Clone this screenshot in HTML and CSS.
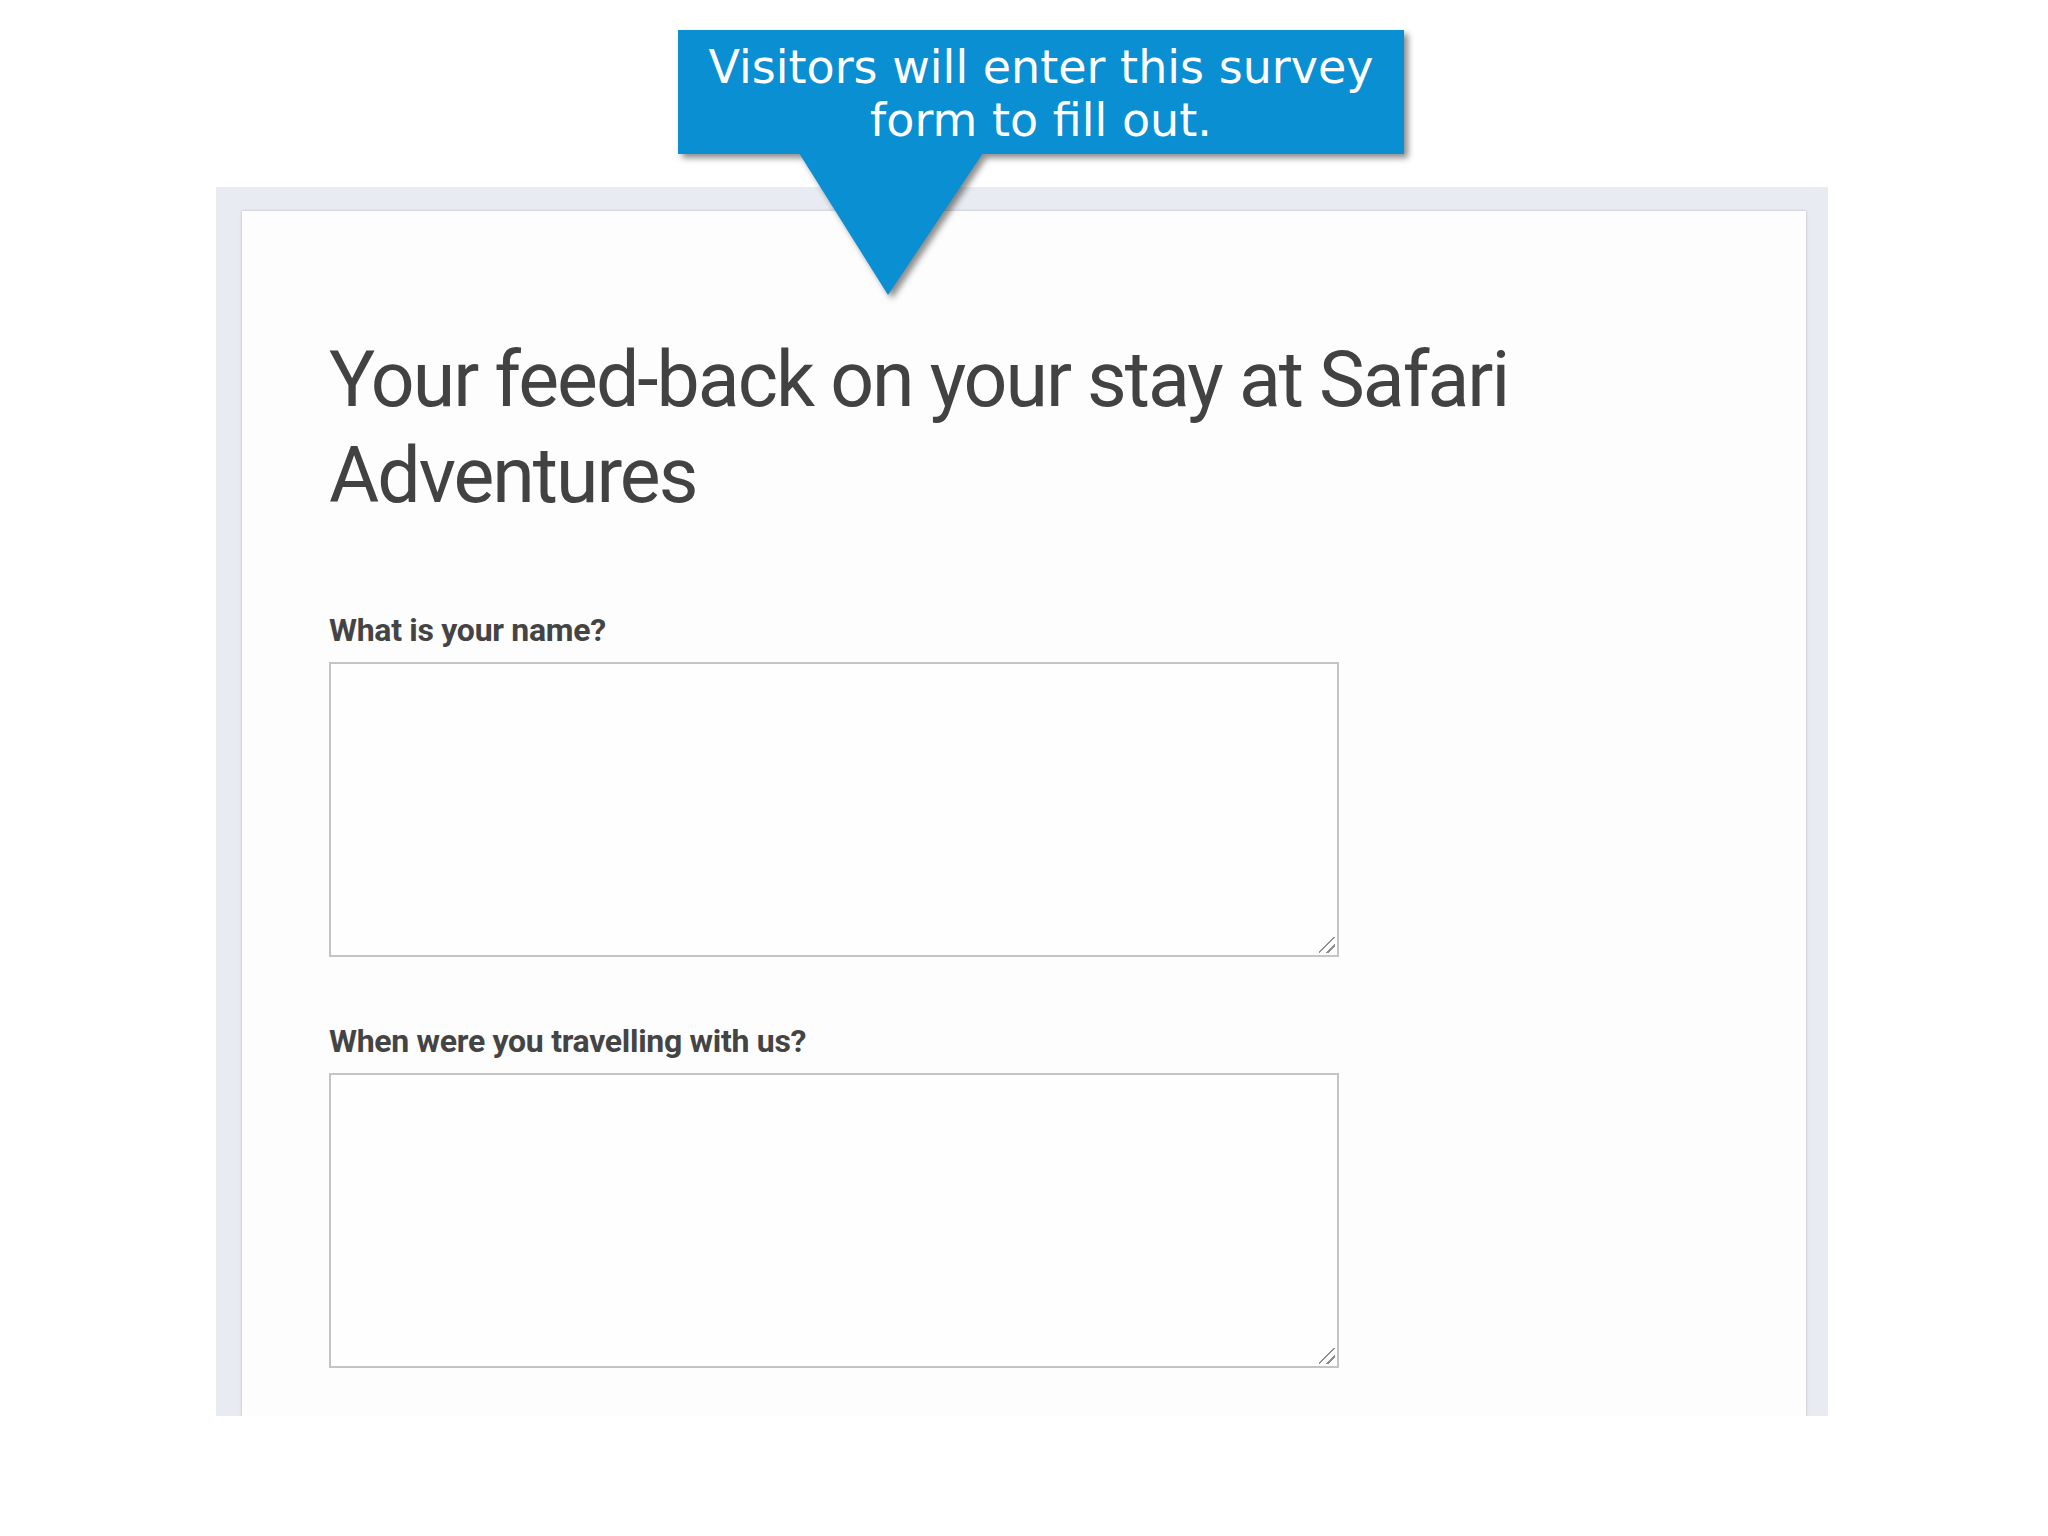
FILE: index.html
```html
<!DOCTYPE html>
<html lang="en">
<head>
<meta charset="utf-8">
<title>Survey</title>
<link rel="stylesheet" href="styles.css">
</head>
<body>
<div class="page">
  <div class="frame">
    <div class="card">
      <h1 class="title">Your feed-back on your stay at Safari Adventures</h1>
      <label class="label" for="q1">What is your name?</label>
      <div class="field-wrap"><textarea id="q1" class="field"></textarea></div>
      <label class="label label-next" for="q2">When were you travelling with us?</label>
      <div class="field-wrap"><textarea id="q2" class="field"></textarea></div>
    </div>
  </div>
  <div class="callout">
    <div class="callout-box">Visitors will enter this survey<br>form to fill out.</div>
    <svg class="callout-tip" width="184" height="142" viewBox="0 0 184 142"><polygon points="0,0 184,0 89,142" fill="#0a8fd3"/></svg>
  </div>
</div>
</body>
</html>
```
FILE: styles.css
```css
html, body {
  margin: 0;
  padding: 0;
  background: #ffffff;
}
.page {
  position: relative;
  width: 2048px;
  height: 1536px;
  padding-top: 187px;
  box-sizing: border-box;
}
.frame {
  margin-left: 216px;
  width: 1612px;
  height: 1229px;
  box-sizing: border-box;
  padding: 24px 22px 0 26px;
  background: #e8ecf2;
  display: flex;
  flex-direction: column;
  overflow: hidden;
}
.card {
  flex: 1;
  margin-bottom: -12px;
  background: #fdfdfd;
  box-shadow: 0 0 3px rgba(0, 0, 0, 0.2);
  padding: 121px 0 0 87px;
  display: flex;
  flex-direction: column;
  align-items: flex-start;
  overflow: hidden;
}
.title {
  margin: 0;
  width: 1250px;
  font-family: Roboto, "Liberation Sans", sans-serif;
  font-weight: 400;
  font-size: 77px;
  letter-spacing: -2px;
  line-height: 96px;
  color: #424242;
}
.label {
  display: block;
  margin-top: 86px;
  font-family: Roboto, "Liberation Sans", sans-serif;
  font-weight: 700;
  font-size: 32px;
  letter-spacing: -0.3px;
  line-height: 40px;
  color: #444444;
}
.label-next {
  margin-top: 64px;
}
.field-wrap {
  position: relative;
  margin-top: 12px;
}
.field {
  display: block;
  margin: 0;
  width: 1010px;
  height: 295px;
  box-sizing: border-box;
  border: 2px solid #c4c4c4;
  border-radius: 0;
  background: #fefefe;
  padding: 0;
  outline: none;
  resize: none;
}
.field-wrap::after {
  content: "";
  position: absolute;
  right: 4px;
  bottom: 4px;
  width: 16px;
  height: 16px;
  background: linear-gradient(135deg, transparent 44%, #8e8e8e 44%, #8e8e8e 53%, transparent 53%, transparent 70%, #8e8e8e 70%, #8e8e8e 79%, transparent 79%);
}
.callout {
  position: absolute;
  left: 678px;
  top: 30px;
  width: 726px;
  filter: drop-shadow(4px 4px 3px rgba(0, 0, 0, 0.45));
}
.callout-box {
  position: relative;
  height: 124px;
  box-sizing: border-box;
  padding-top: 11px;
  background: #0a8fd3;
  color: #ffffff;
  text-align: center;
  font-family: "DejaVu Sans", Verdana, sans-serif;
  font-size: 46px;
  line-height: 53px;
}
.callout-tip {
  position: absolute;
  left: 121px;
  top: 123px;
  display: block;
}
```
